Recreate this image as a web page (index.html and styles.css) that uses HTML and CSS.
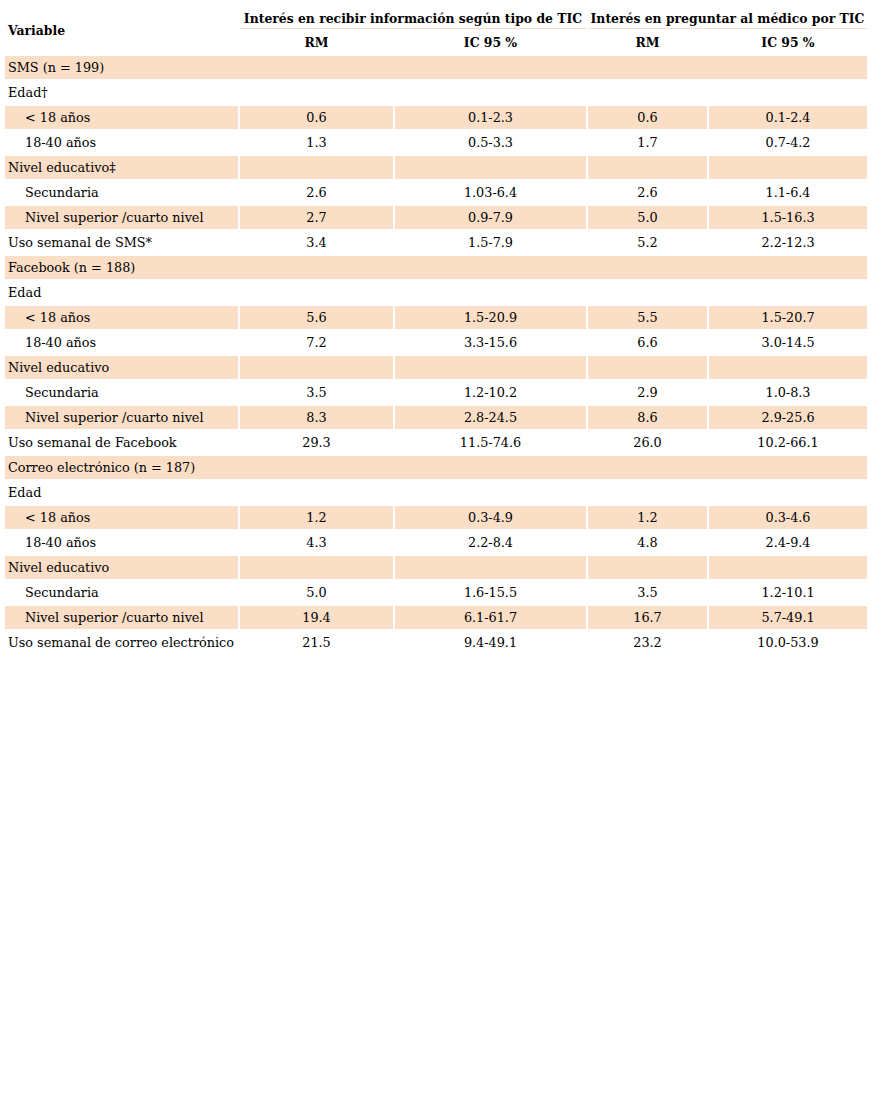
FILE: index.html
```html
<!DOCTYPE html>
<html lang="es">
<head>
<meta charset="utf-8">
<title>Tabla</title>
<link rel="stylesheet" href="styles.css">
</head>
<body>
<table class="data">
  <colgroup>
    <col class="c-var"><col class="c-rm1"><col class="c-ic1"><col class="c-rm2"><col class="c-ic2">
  </colgroup>
  <thead>
    <tr class="h1">
      <th rowspan="2" class="th-var">Variable</th>
      <th colspan="2" class="th-group">Interés en recibir información según tipo de TIC</th>
      <th colspan="2" class="th-group">Interés en preguntar al médico por TIC</th>
    </tr>
    <tr class="h2">
      <th>RM</th><th>IC 95 %</th><th>RM</th><th>IC 95 %</th>
    </tr>
  </thead>
  <tbody>
    <tr class="sh"><td colspan="5" class="lbl">SMS (n = 199)</td></tr>
    <tr><td class="lbl">Edad†</td><td></td><td></td><td></td><td></td></tr>
    <tr class="sh"><td class="lbl sub">&lt; 18 años</td><td>0.6</td><td>0.1-2.3</td><td>0.6</td><td>0.1-2.4</td></tr>
    <tr><td class="lbl sub">18-40 años</td><td>1.3</td><td>0.5-3.3</td><td>1.7</td><td>0.7-4.2</td></tr>
    <tr class="sh"><td class="lbl">Nivel educativo‡</td><td></td><td></td><td></td><td></td></tr>
    <tr><td class="lbl sub">Secundaria</td><td>2.6</td><td>1.03-6.4</td><td>2.6</td><td>1.1-6.4</td></tr>
    <tr class="sh"><td class="lbl sub">Nivel superior /cuarto nivel</td><td>2.7</td><td>0.9-7.9</td><td>5.0</td><td>1.5-16.3</td></tr>
    <tr><td class="lbl">Uso semanal de SMS*</td><td>3.4</td><td>1.5-7.9</td><td>5.2</td><td>2.2-12.3</td></tr>
    <tr class="sh"><td colspan="5" class="lbl">Facebook (n = 188)</td></tr>
    <tr><td class="lbl">Edad</td><td></td><td></td><td></td><td></td></tr>
    <tr class="sh"><td class="lbl sub">&lt; 18 años</td><td>5.6</td><td>1.5-20.9</td><td>5.5</td><td>1.5-20.7</td></tr>
    <tr><td class="lbl sub">18-40 años</td><td>7.2</td><td>3.3-15.6</td><td>6.6</td><td>3.0-14.5</td></tr>
    <tr class="sh"><td class="lbl">Nivel educativo</td><td></td><td></td><td></td><td></td></tr>
    <tr><td class="lbl sub">Secundaria</td><td>3.5</td><td>1.2-10.2</td><td>2.9</td><td>1.0-8.3</td></tr>
    <tr class="sh"><td class="lbl sub">Nivel superior /cuarto nivel</td><td>8.3</td><td>2.8-24.5</td><td>8.6</td><td>2.9-25.6</td></tr>
    <tr><td class="lbl">Uso semanal de Facebook</td><td>29.3</td><td>11.5-74.6</td><td>26.0</td><td>10.2-66.1</td></tr>
    <tr class="sh"><td colspan="5" class="lbl">Correo electrónico (n = 187)</td></tr>
    <tr><td class="lbl">Edad</td><td></td><td></td><td></td><td></td></tr>
    <tr class="sh"><td class="lbl sub">&lt; 18 años</td><td>1.2</td><td>0.3-4.9</td><td>1.2</td><td>0.3-4.6</td></tr>
    <tr><td class="lbl sub">18-40 años</td><td>4.3</td><td>2.2-8.4</td><td>4.8</td><td>2.4-9.4</td></tr>
    <tr class="sh"><td class="lbl">Nivel educativo</td><td></td><td></td><td></td><td></td></tr>
    <tr><td class="lbl sub">Secundaria</td><td>5.0</td><td>1.6-15.5</td><td>3.5</td><td>1.2-10.1</td></tr>
    <tr class="sh"><td class="lbl sub">Nivel superior /cuarto nivel</td><td>19.4</td><td>6.1-61.7</td><td>16.7</td><td>5.7-49.1</td></tr>
    <tr><td class="lbl">Uso semanal de correo electrónico</td><td>21.5</td><td>9.4-49.1</td><td>23.2</td><td>10.0-53.9</td></tr>
  </tbody>
</table>
</body>
</html>
```
FILE: styles.css
```css
html, body {
  margin: 0;
  padding: 0;
  background: #ffffff;
}
body {
  padding: 3px;
  font-family: "DejaVu Serif", "Liberation Serif", serif;
  color: #000;
}
.data {
  border-collapse: separate;
  border-spacing: 2px;
  table-layout: fixed;
  width: 866px;
  margin: 0;
}
.c-var { width: 233px; }
.c-rm1 { width: 153px; }
.c-ic1 { width: 191px; }
.c-rm2 { width: 119px; }
.c-ic2 { width: 158px; }
.data th {
  font-weight: bold;
  font-size: 12.4px;
  padding: 0;
  text-align: center;
  white-space: nowrap;
}
.data th.th-var {
  text-align: left;
  padding-left: 3px;
  padding-top: 2px;
  vertical-align: middle;
}
.h1 th.th-group {
  height: 21px;
  border-bottom: 1px solid #fbdcc3;
  vertical-align: bottom;
  padding-bottom: 2px;
}
.h2 th {
  height: 23px;
}
.data td {
  height: 23px;
  padding: 0;
  font-size: 12.8px;
  text-align: center;
  vertical-align: middle;
  white-space: nowrap;
}
.data td.lbl {
  text-align: left;
  padding-left: 3px;
}
.data td.sub {
  padding-left: 20px;
}
.sh td {
  background: #fbdec6;
}
```
